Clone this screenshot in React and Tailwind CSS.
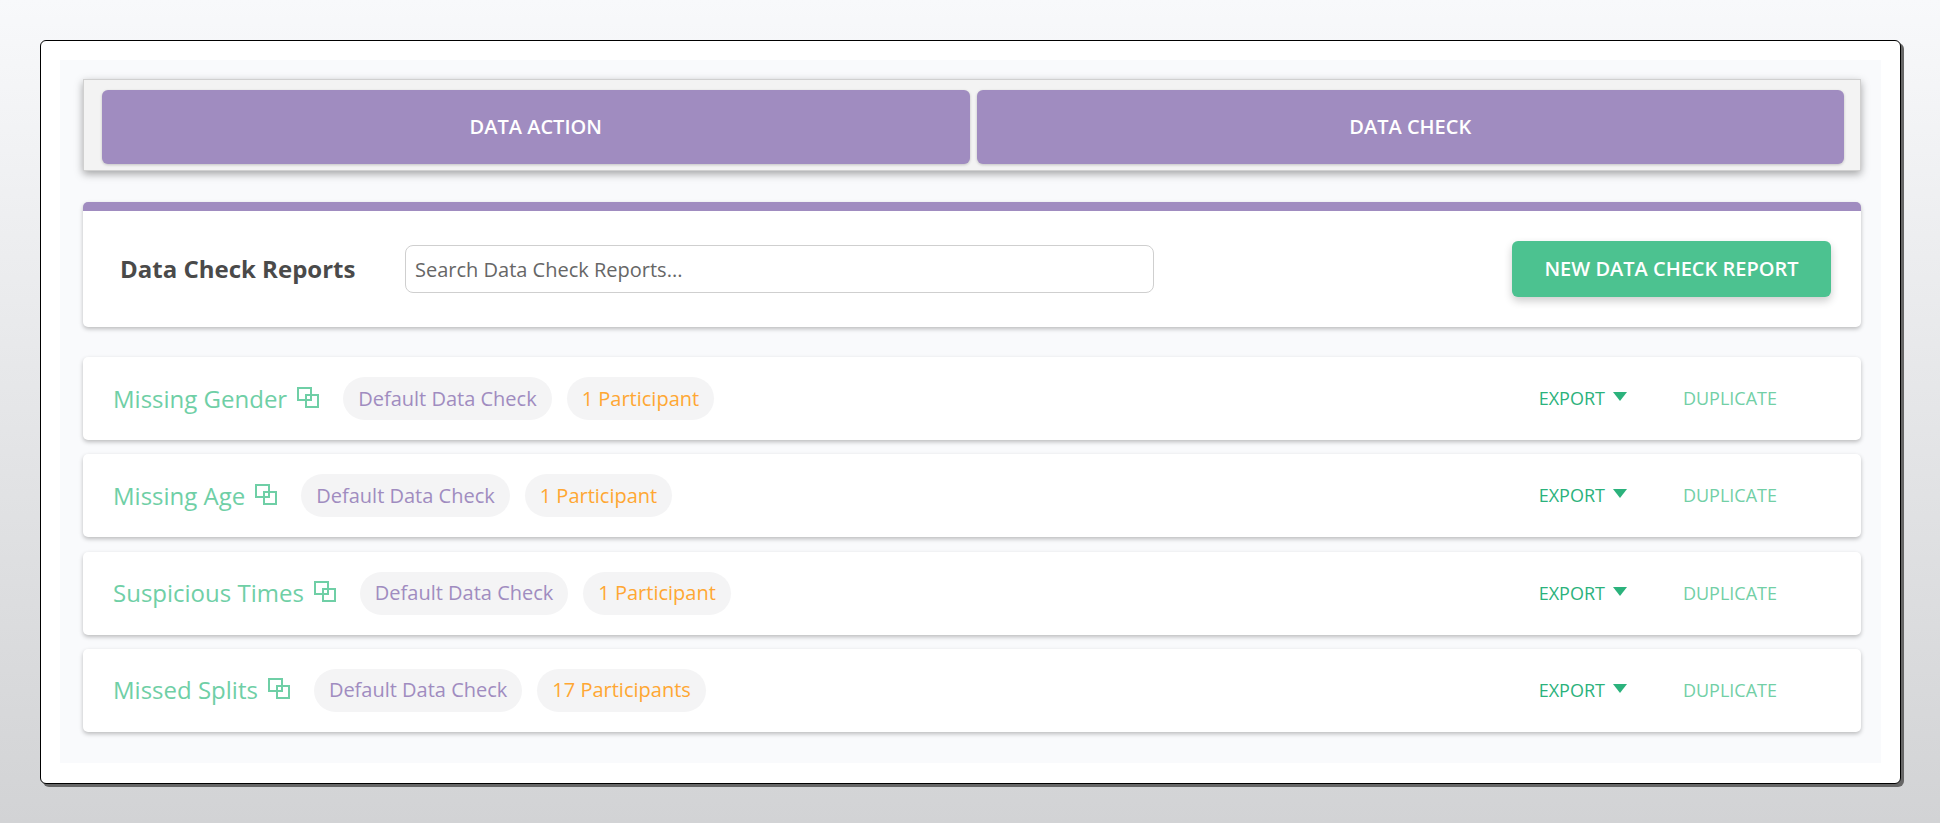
const reports = [
  { name: "Missing Gender", participants: "1 Participant" },
  { name: "Missing Age", participants: "1 Participant" },
  { name: "Suspicious Times", participants: "1 Participant" },
  { name: "Missed Splits", participants: "17 Participants" },
];

const CopyIcon = () => (
  <svg width="22" height="21" viewBox="0 0 22 21" fill="none" className="ml-[10px] mb-[3px] shrink-0">
    <rect x="1" y="1" width="13" height="12" stroke="#6fcfa6" strokeWidth="2" />
    <rect x="9" y="8" width="12" height="12" stroke="#6fcfa6" strokeWidth="2" />
  </svg>
);

const ReportRow = ({ report }) => (
  <div className="flex h-[83px] items-center rounded-[5px] bg-white pl-[30px] pr-[84px] shadow-[0_2px_4px_rgba(0,0,0,0.25)]">
    <span className="text-[24px] font-medium text-[#6fcfa6]">{report.name}</span>
    <CopyIcon />
    <span className="ml-6 flex h-[43px] items-center rounded-full bg-[#f4f4f5] px-[15px] text-[20px] font-medium text-[#a08cc0]">
      Default Data Check
    </span>
    <span className="ml-[15px] flex h-[43px] items-center rounded-full bg-[#f4f4f5] px-[15px] text-[20px] font-medium text-[#ffa733]">
      {report.participants}
    </span>
    <span className="ml-auto flex items-center text-[18px] font-medium text-[#2bb27c]">
      EXPORT
      <svg width="14" height="9" viewBox="0 0 14 9" className="ml-2 mb-1">
        <path d="M0 0H14L7 9Z" fill="#2bb27c" />
      </svg>
    </span>
    <span className="ml-[56px] text-[18px] font-medium text-[#72cfa6]">DUPLICATE</span>
  </div>
);

export default function App() {
  return (
    <div className="h-[823px] overflow-hidden bg-gradient-to-b from-[#f8f9fb] to-[#d2d3d5] pl-[40px] pr-[39px] pt-[40px] font-['Open_Sans',sans-serif]">
      <div className="h-[744px] rounded-[6px] border border-black bg-white p-[19px] shadow-[3px_3px_0_#666]">
        <div className="flex h-[703px] flex-col bg-[#f9fafc] pl-[23px] pr-[20px] pt-[19px]">
          <div className="flex h-[92px] gap-[7px] border border-[#d0d0d0] bg-[#f3f3f3] pb-[6px] pl-[18px] pr-[16px] pt-[10px] shadow-[0_3px_8px_rgba(0,0,0,0.35)]">
            <button className="flex-1 rounded-[6px] bg-[#a08cc0] text-[20px] font-semibold text-white shadow-[0_1px_3px_rgba(0,0,0,0.2)]">
              DATA ACTION
            </button>
            <button className="flex-1 rounded-[6px] bg-[#a08cc0] text-[20px] font-semibold text-white shadow-[0_1px_3px_rgba(0,0,0,0.2)]">
              DATA CHECK
            </button>
          </div>

          <div className="mt-[31px] flex h-[125px] items-center rounded-[5px] border-t-[9px] border-[#a08cc0] bg-white pl-[37px] pr-[30px] shadow-[0_2px_4px_rgba(0,0,0,0.25)]">
            <h2 className="w-[285px] text-[24px] font-bold text-[#4a4a4a]">Data Check Reports</h2>
            <input
              placeholder="Search Data Check Reports..."
              className="h-[48px] w-[749px] rounded-[8px] border border-[#cfcfcf] px-[9px] text-[20px] text-[#555] placeholder:text-[#666]"
            />
            <button className="ml-auto h-[56px] w-[319px] rounded-[6px] bg-[#4cc290] text-[20px] font-semibold text-white shadow-[0_4px_8px_rgba(0,0,0,0.2)]">
              NEW DATA CHECK REPORT
            </button>
          </div>

          <div className="mt-[30px] flex flex-col gap-[14.3px]">
            {reports.map((report) => (
              <ReportRow key={report.name} report={report} />
            ))}
          </div>
        </div>
      </div>
    </div>
  );
}
